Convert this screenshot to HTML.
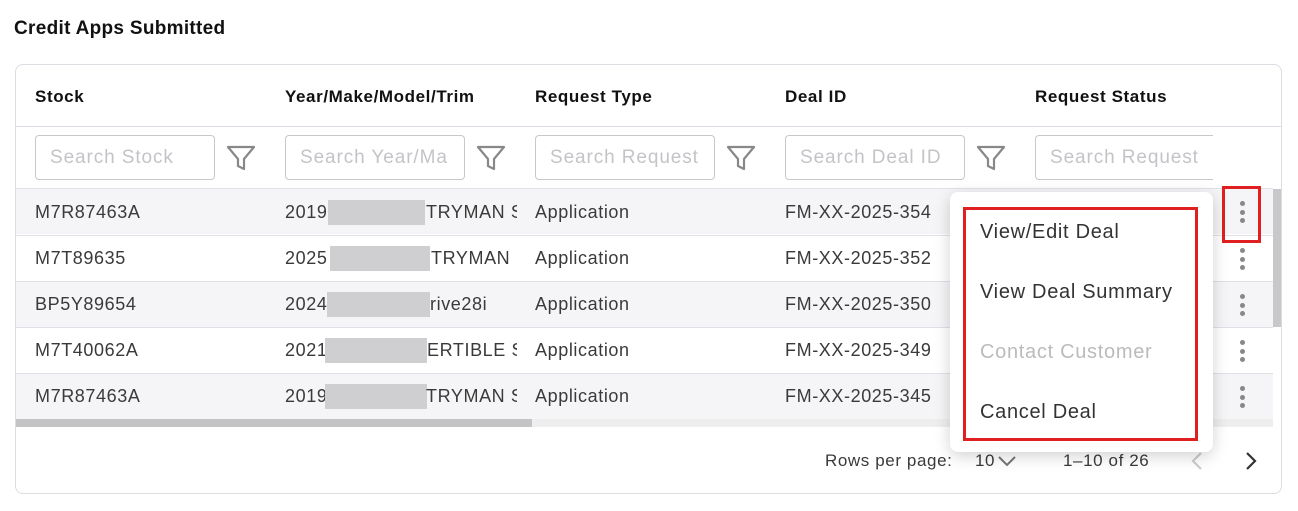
<!DOCTYPE html>
<html><head><style>
*{box-sizing:border-box;margin:0;padding:0}
body{width:1298px;height:511px;background:#fff;font-family:"Liberation Sans",sans-serif;position:relative;overflow:hidden;color:#333}
.a{position:absolute}
h1{position:absolute;left:14px;top:18px;font-size:19px;font-weight:bold;color:#111;letter-spacing:0.3px}
.card{position:absolute;left:15px;top:64px;width:1267px;height:430px;border:1px solid #dcdde3;border-radius:8px;overflow:hidden}
.th{position:absolute;top:87px;font-size:17px;font-weight:bold;color:#111;letter-spacing:0.6px}
.inp{position:absolute;top:135px;width:180px;height:45px;border:1px solid #c8c8cc;border-radius:4px;font-size:19px;color:#c4c4c8;padding:11px 14px;white-space:nowrap;overflow:hidden;letter-spacing:0.9px}
.row{position:absolute;left:16px;width:1257px;height:46px;border-top:1px solid #e0e0e8}
.c{position:absolute;font-size:18px;color:#3a3a3a;white-space:nowrap;letter-spacing:0.6px}
.red{position:absolute;background:#cfcfd1}
.dots{position:absolute;left:1240px;width:5px}
.dots i{display:block;width:5px;height:5px;border-radius:3px;background:#888;margin-bottom:3.5px}
.mi{position:absolute;left:980px;font-size:20px;color:#333;letter-spacing:0.7px}
</style></head><body>
<h1>Credit Apps Submitted</h1>
<div class="card"></div>
<div class="a" style="left:16px;top:126px;width:1265px;height:1px;background:#dcdde6"></div>
<div class="th" style="left:35px">Stock</div>
<div class="th" style="left:285px">Year/Make/Model/Trim</div>
<div class="th" style="left:535px">Request Type</div>
<div class="th" style="left:785px">Deal ID</div>
<div class="th" style="left:1035px">Request Status</div>
<div class="inp" style="left:35px">Search Stock</div>
<div class="inp" style="left:285px">Search Year/Ma</div>
<div class="inp" style="left:535px">Search Request</div>
<div class="inp" style="left:785px">Search Deal ID</div>
<div class="inp" style="left:1035px;width:178px;border-right:none;border-radius:4px 0 0 4px">Search Request</div>
<svg class="a" style="left:226px;top:144px" width="30" height="28" viewBox="0 0 30 28"><path d="M2 3H28L18 15V25L12 22V15Z" fill="none" stroke="#888" stroke-width="2.2" stroke-linejoin="round"/></svg>
<svg class="a" style="left:476px;top:144px" width="30" height="28" viewBox="0 0 30 28"><path d="M2 3H28L18 15V25L12 22V15Z" fill="none" stroke="#888" stroke-width="2.2" stroke-linejoin="round"/></svg>
<svg class="a" style="left:726px;top:144px" width="30" height="28" viewBox="0 0 30 28"><path d="M2 3H28L18 15V25L12 22V15Z" fill="none" stroke="#888" stroke-width="2.2" stroke-linejoin="round"/></svg>
<svg class="a" style="left:976px;top:144px" width="30" height="28" viewBox="0 0 30 28"><path d="M2 3H28L18 15V25L12 22V15Z" fill="none" stroke="#888" stroke-width="2.2" stroke-linejoin="round"/></svg>

<div class="row" style="top:188px;background:#f5f5f7"></div>
<div class="row" style="top:235px"></div>
<div class="row" style="top:281px;background:#f5f5f7"></div>
<div class="row" style="top:327px"></div>
<div class="row" style="top:373px;background:#f5f5f7"></div>
<div class="a" style="left:16px;top:419px;width:1257px;height:8px;background:#eee"></div>
<div class="a" style="left:16px;top:419px;width:516px;height:8px;background:#c4c4c6"></div>
<div class="a" style="left:1273px;top:189px;width:8px;height:138px;background:#c8c8ca"></div>

<div class="c" style="left:35px;top:202px">M7R87463A</div><div class="c" style="left:285px;top:202px">2019</div><div class="red" style="left:328px;top:200px;width:97px;height:25px"></div><div class="c" style="left:426px;top:202px;width:91px;overflow:hidden">TRYMAN S</div><div class="c" style="left:535px;top:202px">Application</div><div class="c" style="left:785px;top:202px">FM-XX-2025-354</div>
<div class="c" style="left:35px;top:248px">M7T89635</div><div class="c" style="left:285px;top:248px">2025</div><div class="red" style="left:330px;top:246px;width:100px;height:25px"></div><div class="c" style="left:431px;top:248px;width:86px;overflow:hidden">TRYMAN I(</div><div class="c" style="left:535px;top:248px">Application</div><div class="c" style="left:785px;top:248px">FM-XX-2025-352</div>
<div class="c" style="left:35px;top:294px">BP5Y89654</div><div class="c" style="left:285px;top:294px">2024</div><div class="red" style="left:327px;top:292px;width:103px;height:25px"></div><div class="c" style="left:430px;top:294px">rive28i</div><div class="c" style="left:535px;top:294px">Application</div><div class="c" style="left:785px;top:294px">FM-XX-2025-350</div>
<div class="c" style="left:35px;top:340px">M7T40062A</div><div class="c" style="left:285px;top:340px">2021</div><div class="red" style="left:325px;top:338px;width:102px;height:25px"></div><div class="c" style="left:427px;top:340px;width:90px;overflow:hidden">ERTIBLE SI</div><div class="c" style="left:535px;top:340px">Application</div><div class="c" style="left:785px;top:340px">FM-XX-2025-349</div>
<div class="c" style="left:35px;top:386px">M7R87463A</div><div class="c" style="left:285px;top:386px">2019</div><div class="red" style="left:325px;top:384px;width:102px;height:25px"></div><div class="c" style="left:426px;top:386px;width:91px;overflow:hidden">TRYMAN S</div><div class="c" style="left:535px;top:386px">Application</div><div class="c" style="left:785px;top:386px">FM-XX-2025-345</div>

<div class="dots" style="top:201px"><i></i><i></i><i></i></div>
<div class="dots" style="top:248px"><i></i><i></i><i></i></div>
<div class="dots" style="top:294px"><i></i><i></i><i></i></div>
<div class="dots" style="top:340px"><i></i><i></i><i></i></div>
<div class="dots" style="top:386px"><i></i><i></i><i></i></div>
<div class="a" style="left:1222px;top:186px;width:39px;height:57px;border:3px solid #e02020"></div>

<div class="c" style="left:825px;top:451px;font-size:17px">Rows per page:</div>
<div class="c" style="left:975px;top:451px;font-size:17px">10</div>
<svg class="a" style="left:997px;top:454px" width="20" height="14"><path d="M2 3L10 11L18 3" fill="none" stroke="#777" stroke-width="2"/></svg>
<div class="c" style="left:1063px;top:451px;font-size:17px">1–10 of 26</div>
<svg class="a" style="left:1190px;top:451px" width="14" height="20"><path d="M11 2L3 10L11 18" fill="none" stroke="#ccc" stroke-width="2.2"/></svg>
<svg class="a" style="left:1244px;top:451px" width="14" height="20"><path d="M3 2L11 10L3 18" fill="none" stroke="#333" stroke-width="2.2"/></svg>

<div class="a" style="left:950px;top:192px;width:263px;height:260px;background:#fff;border-radius:8px;box-shadow:0 4px 16px rgba(0,0,0,.18)"></div>
<div class="a" style="left:963px;top:207px;width:235px;height:234px;border:3px solid #e02020"></div>
<div class="mi" style="top:221px">View/Edit Deal</div>
<div class="mi" style="top:281px">View Deal Summary</div>
<div class="mi" style="top:341px;color:#bbb">Contact Customer</div>
<div class="mi" style="top:401px">Cancel Deal</div>
</body></html>
